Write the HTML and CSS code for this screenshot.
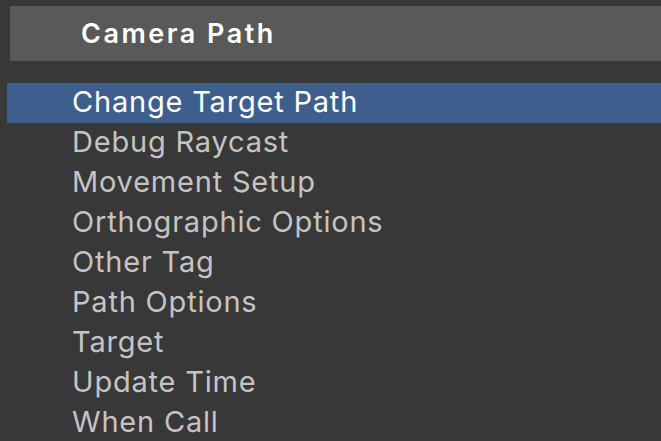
FILE: index.html
```html
<!DOCTYPE html>
<html>
<head>
<meta charset="utf-8">
<link rel="stylesheet" href="styles.css">
</head>
<body>
<div class="panel">
  <div class="header">Camera Path</div>
  <ul class="list">
    <li class="item selected">Change Target Path</li>
    <li class="item">Debug Raycast</li>
    <li class="item">Movement Setup</li>
    <li class="item">Orthographic Options</li>
    <li class="item">Other Tag</li>
    <li class="item">Path Options</li>
    <li class="item">Target</li>
    <li class="item">Update Time</li>
    <li class="item">When Call</li>
  </ul>
</div>
</body>
</html>
```

FILE: styles.css
```css
html, body {
  margin: 0;
  padding: 0;
  background: #383838;
  overflow: hidden;
}
.panel {
  width: 661px;
  height: 441px;
  padding-top: 6px;
  box-sizing: border-box;
  font-family: Inter, "Noto Sans", sans-serif;
}
.header {
  margin-left: 10px;
  height: 55px;
  background: #595959;
  color: #ffffff;
  font-weight: 600;
  font-size: 27px;
  display: flex;
  align-items: center;
  padding-left: 71px;
  letter-spacing: 2.5px;
}
.list {
  list-style: none;
  margin: 22px 0 0 7px;
  padding: 0;
}
.item {
  height: 40px;
  box-sizing: border-box;
  display: flex;
  align-items: center;
  padding-left: 65px;
  padding-bottom: 4px;
  font-size: 29px;
  color: #c4c4c4;
  letter-spacing: 0.8px;
}
.item.selected {
  background: #3e5f8e;
  color: #ffffff;
}
```
